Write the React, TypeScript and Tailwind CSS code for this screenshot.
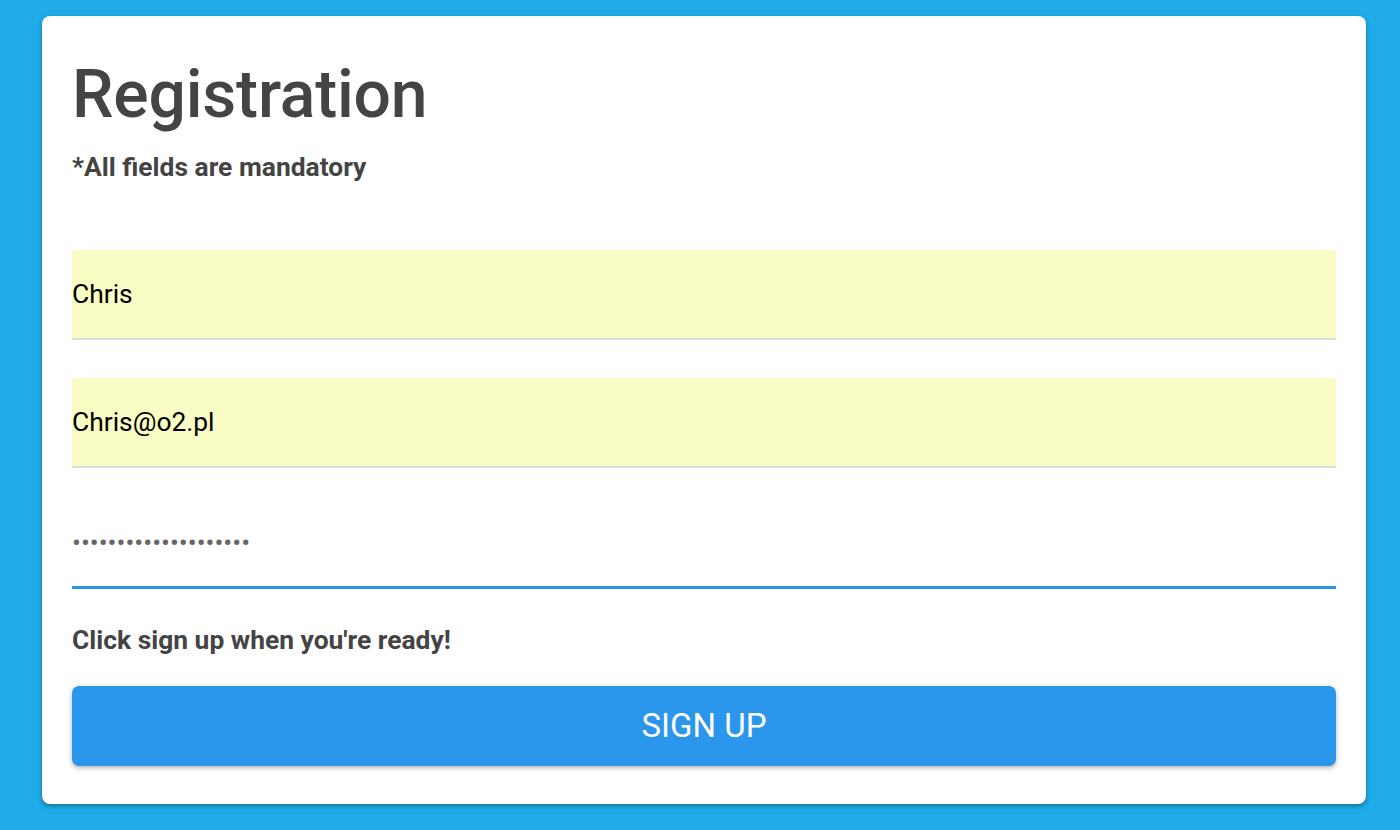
import React from 'react';

const font = { fontFamily: 'Roboto, "Noto Sans", sans-serif' };

export default function App() {
  return (
    <div className="min-h-screen bg-[#1eabe7] pl-[42px] pr-[34px] pt-[16px] pb-[26px]" style={font}>
      <div className="bg-white rounded-lg shadow-[0_2px_4px_rgba(0,0,0,0.35)] px-[30px] pt-[46px] pb-[38px]">
        <h1 className="text-[66px] leading-none font-medium text-[#444] tracking-[-0.2px]">Registration</h1>
        <p className="mt-[26px] text-[26.4px] leading-[26px] font-bold text-[#444]">*All fields are mandatory</p>

        <form className="mt-[70px] flex flex-col" onSubmit={(e) => e.preventDefault()}>
          <input
            type="text"
            readOnly
            defaultValue="Chris"
            className="h-[90px] bg-[#f9fcc3] border-b-2 border-[#dddddd] text-[26.4px] text-black outline-none"
          />
          <input
            type="email"
            readOnly
            defaultValue="Chris@o2.pl"
            className="mt-[38px] h-[90px] bg-[#f9fcc3] border-b-2 border-[#dddddd] text-[26.4px] text-black outline-none"
          />
          <input
            type="password"
            readOnly
            defaultValue="secretpassword123456"
            className="mt-[32px] h-[89px] bg-white border-b-[3px] border-[#2b96e8] text-[26.4px] text-[#666] outline-none"
          />

          <p className="mt-[38px] text-[26.4px] leading-[26px] font-bold text-[#444]">Click sign up when you're ready!</p>

          <button
            type="submit"
            className="mt-[33px] h-[80px] w-full rounded-[7px] bg-[#2a96ec] text-white text-[33px] uppercase shadow-[0_2px_5px_rgba(0,0,0,0.3)]"
          >
            Sign up
          </button>
        </form>
      </div>
    </div>
  );
}
